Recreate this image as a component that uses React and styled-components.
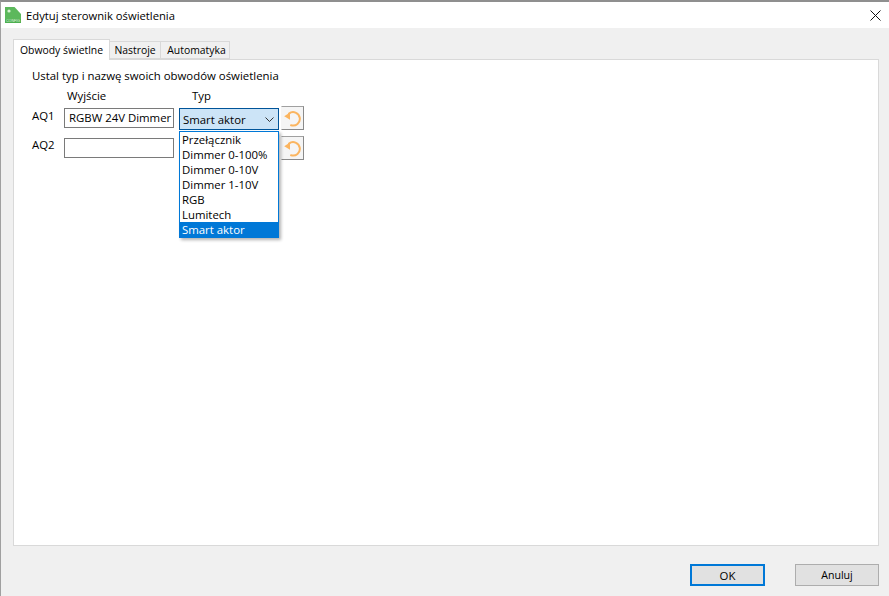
import React from "react";
import styled, { createGlobalStyle } from "styled-components";

const GlobalStyle = createGlobalStyle`
  html, body, #root {
    margin: 0;
    padding: 0;
    height: 100%;
  }

  body {
    overflow: hidden;
    background: #f0f0f0;
    font-family: "Open Sans", "Noto Sans", sans-serif;
    font-size: 11.4px;
    color: #000;
  }
`;

const Window = styled.div`
  height: 100vh;
  box-sizing: border-box;
  display: flex;
  flex-direction: column;
  background: #f0f0f0;
  border-top: 2px solid #8f8f8f;
  border-left: 1px solid #a0a0a0;
`;

const TitleBar = styled.div`
  height: 26px;
  flex: none;
  display: flex;
  align-items: center;
  padding-left: 4px;
  gap: 5px;
  background: #fff;
  font-size: 11.25px;
`;

const TitleText = styled.span`
  flex: 1;
`;

const CloseButton = styled.div`
  width: 28px;
  display: flex;
  justify-content: center;
  align-items: center;
`;

const Body = styled.div`
  flex: 1;
  min-height: 0;
  display: flex;
  flex-direction: column;
  padding: 12px 10px 0 12px;
`;

const TabStrip = styled.div`
  height: 19px;
  flex: none;
  display: flex;
  align-items: flex-end;
  position: relative;
  z-index: 1;
`;

const Tab = styled.div`
  box-sizing: border-box;
  height: ${(props) => (props.$active ? "21px" : "18px")};
  margin-bottom: ${(props) => (props.$active ? "-1px" : "0")};
  width: ${(props) => props.$width}px;
  padding-left: ${(props) => props.$inset || 0}px;
  display: flex;
  align-items: center;
  justify-content: center;
  background: ${(props) => (props.$active ? "#fff" : "#f0f0f0")};
  border: 1px solid #d9d9d9;
  border-left: ${(props) => (props.$active ? "1px solid #d9d9d9" : "none")};
  border-bottom: ${(props) => (props.$active ? "none" : "1px solid #d9d9d9")};
  font-size: 10.4px;
  white-space: nowrap;
`;

const Panel = styled.div`
  flex: 1;
  min-height: 0;
  box-sizing: border-box;
  background: #fff;
  border: 1px solid #d9d9d9;
  padding: 8px 0 0 18px;
`;

const Heading = styled.div`
  height: 16px;
  line-height: 16px;
`;

const ColumnLabels = styled.div`
  display: flex;
  height: 16px;
  line-height: 16px;
  margin-top: 4px;
  padding-left: 35px;
`;

const ColumnLabel = styled.div`
  width: ${(props) => props.$width}px;
`;

const Row = styled.div`
  display: flex;
  align-items: flex-start;
  height: 30px;
  margin-top: ${(props) => props.$top || 0}px;
`;

const RowLabel = styled.div`
  width: 32px;
  padding-top: ${(props) => props.$top}px;
  line-height: 16px;
`;

const TextBox = styled.div`
  box-sizing: border-box;
  width: 110px;
  height: 20px;
  margin-top: 2px;
  border: 1px solid #7a7a7a;
  padding-left: 4px;
  line-height: 18px;
  white-space: nowrap;
  overflow: hidden;
  background: #fff;
`;

const ComboArea = styled.div`
  position: relative;
  width: 100px;
  margin-left: 5px;
  margin-right: 2px;
  height: 24px;
`;

const Combo = styled.div`
  box-sizing: border-box;
  width: 100%;
  height: 22px;
  margin-top: 2px;
  display: flex;
  align-items: center;
  justify-content: space-between;
  padding: 0 4px 0 3px;
  background: #cce4f7;
  border: 1px solid #005499;
`;

const DropList = styled.div`
  position: absolute;
  left: 0;
  top: 25px;
  width: 100%;
  box-sizing: border-box;
  background: #fff;
  border: 1px solid #0078d7;
  box-shadow: 2px 2px 3px rgba(0, 0, 0, 0.3);
  z-index: 5;
`;

const DropItem = styled.div`
  height: 15px;
  line-height: 15px;
  padding-left: 2px;
  background: ${(props) => (props.$selected ? "#0078d7" : "#fff")};
  color: ${(props) => (props.$selected ? "#fff" : "#000")};
  white-space: nowrap;
`;

const IconButton = styled.div`
  box-sizing: border-box;
  width: 23px;
  height: 24px;
  display: flex;
  align-items: center;
  justify-content: center;
  background: #f5f5f5;
  border-top: 1px solid #a0a0a0;
  border-right: 1px solid #8a8a8a;
  border-bottom: 1px solid #8a8a8a;
  border-left: 1px solid #f5f5f5;
`;

const Footer = styled.div`
  height: 50px;
  flex: none;
  display: flex;
  justify-content: flex-end;
  align-items: flex-start;
  gap: 30px;
  padding: 18px 0 0 0;
  box-sizing: border-box;
`;

const DialogButton = styled.div`
  box-sizing: border-box;
  width: ${(props) => (props.$primary ? "75px" : "84px")};
  height: 22px;
  display: flex;
  align-items: center;
  justify-content: center;
  background: #e1e1e1;
  border: ${(props) =>
    props.$primary ? "2px solid #0078d7" : "1px solid #adadad"};
  font-size: ${(props) => (props.$primary ? "11.4px" : "10.6px")};
`;

const ConfigIcon = () => (
  <svg width="16" height="16" viewBox="0 0 16 16">
    <path d="M0 0H9.5L16 7V16H0Z" fill="#5cb85c" />
    <rect x="0" y="12" width="16" height="4" fill="#4caf50" />
    <circle cx="4" cy="4" r="1.6" fill="#d6f2d0" />
    <text x="8" y="15.2" fontSize="3.6" fill="#e8f7e4" textAnchor="middle" fontFamily="Liberation Sans, sans-serif">
      CONFIG
    </text>
  </svg>
);

const CloseIcon = () => (
  <svg width="11" height="11" viewBox="0 0 11 11">
    <path d="M0.5 0.5L10.5 10.5M10.5 0.5L0.5 10.5" stroke="#111" strokeWidth="1" fill="none" />
  </svg>
);

const ChevronIcon = () => (
  <svg width="9" height="5" viewBox="0 0 9 5">
    <path d="M0.5 0.5L4.5 4.5L8.5 0.5" stroke="#333" strokeWidth="1" fill="none" />
  </svg>
);

const UndoIcon = () => (
  <svg width="18" height="17" viewBox="0 0 18 17">
    <path d="M5 3.6A6.7 6.7 0 1 1 7 15.2" stroke="#fbb560" strokeWidth="2" fill="none" strokeLinecap="round" />
    <path d="M0.2 6.3L6 2.4V9.8Z" fill="#fbb560" />
  </svg>
);

const typeOptions = [
  "Przełącznik",
  "Dimmer 0-100%",
  "Dimmer 0-10V",
  "Dimmer 1-10V",
  "RGB",
  "Lumitech",
  "Smart aktor",
];

export default function App() {
  return (
    <>
      <GlobalStyle />
      <Window>
        <TitleBar>
          <ConfigIcon />
          <TitleText>Edytuj sterownik oświetlenia</TitleText>
          <CloseButton>
            <CloseIcon />
          </CloseButton>
        </TitleBar>
        <Body>
          <TabStrip>
            <Tab $active $width={97}>Obwody świetlne</Tab>
            <Tab $width={51}>Nastroje</Tab>
            <Tab $width={69} $inset={3}>Automatyka</Tab>
          </TabStrip>
          <Panel>
            <Heading>Ustal typ i nazwę swoich obwodów oświetlenia</Heading>
            <ColumnLabels>
              <ColumnLabel $width={125}>Wyjście</ColumnLabel>
              <ColumnLabel $width={60}>Typ</ColumnLabel>
            </ColumnLabels>
            <Row $top={2}>
              <RowLabel $top={2}>AQ1</RowLabel>
              <TextBox>RGBW 24V Dimmer</TextBox>
              <ComboArea>
                <Combo>
                  Smart aktor
                  <ChevronIcon />
                </Combo>
                <DropList>
                  {typeOptions.map((option) => (
                    <DropItem key={option} $selected={option === "Smart aktor"}>
                      {option}
                    </DropItem>
                  ))}
                </DropList>
              </ComboArea>
              <IconButton>
                <UndoIcon />
              </IconButton>
            </Row>
            <Row>
              <RowLabel $top={1}>AQ2</RowLabel>
              <TextBox />
              <ComboArea />
              <IconButton>
                <UndoIcon />
              </IconButton>
            </Row>
          </Panel>
          <Footer>
            <DialogButton $primary>OK</DialogButton>
            <DialogButton>Anuluj</DialogButton>
          </Footer>
        </Body>
      </Window>
    </>
  );
}
